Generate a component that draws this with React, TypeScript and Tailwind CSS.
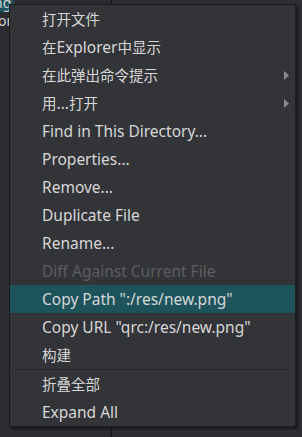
import React from "react";

type Item = { label: string; arrow?: boolean; disabled?: boolean; active?: boolean; sep?: boolean };

const items: Item[] = [
  { label: "打开文件" },
  { label: "在Explorer中显示" },
  { label: "在此弹出命令提示", arrow: true },
  { label: "用...打开", arrow: true },
  { label: "Find in This Directory..." },
  { label: "Properties..." },
  { label: "Remove..." },
  { label: "Duplicate File" },
  { label: "Rename..." },
  { label: "Diff Against Current File", disabled: true },
  { label: 'Copy Path ":/res/new.png"', active: true },
  { label: 'Copy URL "qrc:/res/new.png"' },
  { label: "构建" },
  { label: "", sep: true },
  { label: "折叠全部" },
  { label: "Expand All" },
];

function Label({ text }: { text: string }) {
  const parts = text.split(/([\u4e00-\u9fff]+)/).filter((p) => p.length > 0);
  return (
    <span className="flex-1 whitespace-nowrap">
      {parts.map((p, i) =>
        /[\u4e00-\u9fff]/.test(p) ? (
          <span key={i} className="text-[14.5px]">
            {p}
          </span>
        ) : (
          <span key={i} className="text-[15.5px]">
            {p}
          </span>
        )
      )}
    </span>
  );
}

export default function App() {
  return (
    <div
      className="relative w-[302px] h-[437px] overflow-hidden bg-[#2d2e31]"
      style={{ fontFamily: '"Noto Sans", "Noto Sans CJK SC", sans-serif' }}
    >
      {/* background content */}
      <div className="flex h-full">
        <div className="w-[111px] h-full bg-[#2b2c2f] flex flex-col text-[14px] text-[#d4d4d4] leading-[14px]">
          <div className="w-[14px] h-[12px] bg-[#1d545c] overflow-hidden">
            <span className="block -mt-[4px] -ml-[6px]">ng</span>
          </div>
          <div className="mt-[2px] -ml-[2px] overflow-hidden w-[12px]">or</div>
        </div>
        <div className="w-px h-full bg-[#131416]" />
        <div className="flex-1 h-full bg-[#2d2e31]" />
      </div>

      {/* context menu */}
      <div className="absolute left-[9px] top-[4px] w-[287px] border border-[#1c1d1f] bg-[#333437] shadow-[2px_2px_2px_rgba(0,0,0,0.45)]">
        {items.map((it, i) =>
          it.sep ? (
            <div key={i} className="h-px px-[5px]">
              <div className="h-px w-full bg-[#232426]" />
            </div>
          ) : (
            <div
              key={i}
              className={
                "h-[28px] flex items-center pl-[32px] pr-[6px] leading-none " +
                (it.active ? "bg-[#1d545c] " : "") +
                (it.disabled ? "text-[#5d5e60]" : "text-[#d7d7d7]")
              }
            >
              <Label text={it.label} />
              {it.arrow && (
                <svg width="5" height="9" viewBox="0 0 5 9">
                  <path d="M0 0 L5 4.5 L0 9 Z" fill="#8b8c8e" />
                </svg>
              )}
            </div>
          )
        )}
      </div>
    </div>
  );
}
